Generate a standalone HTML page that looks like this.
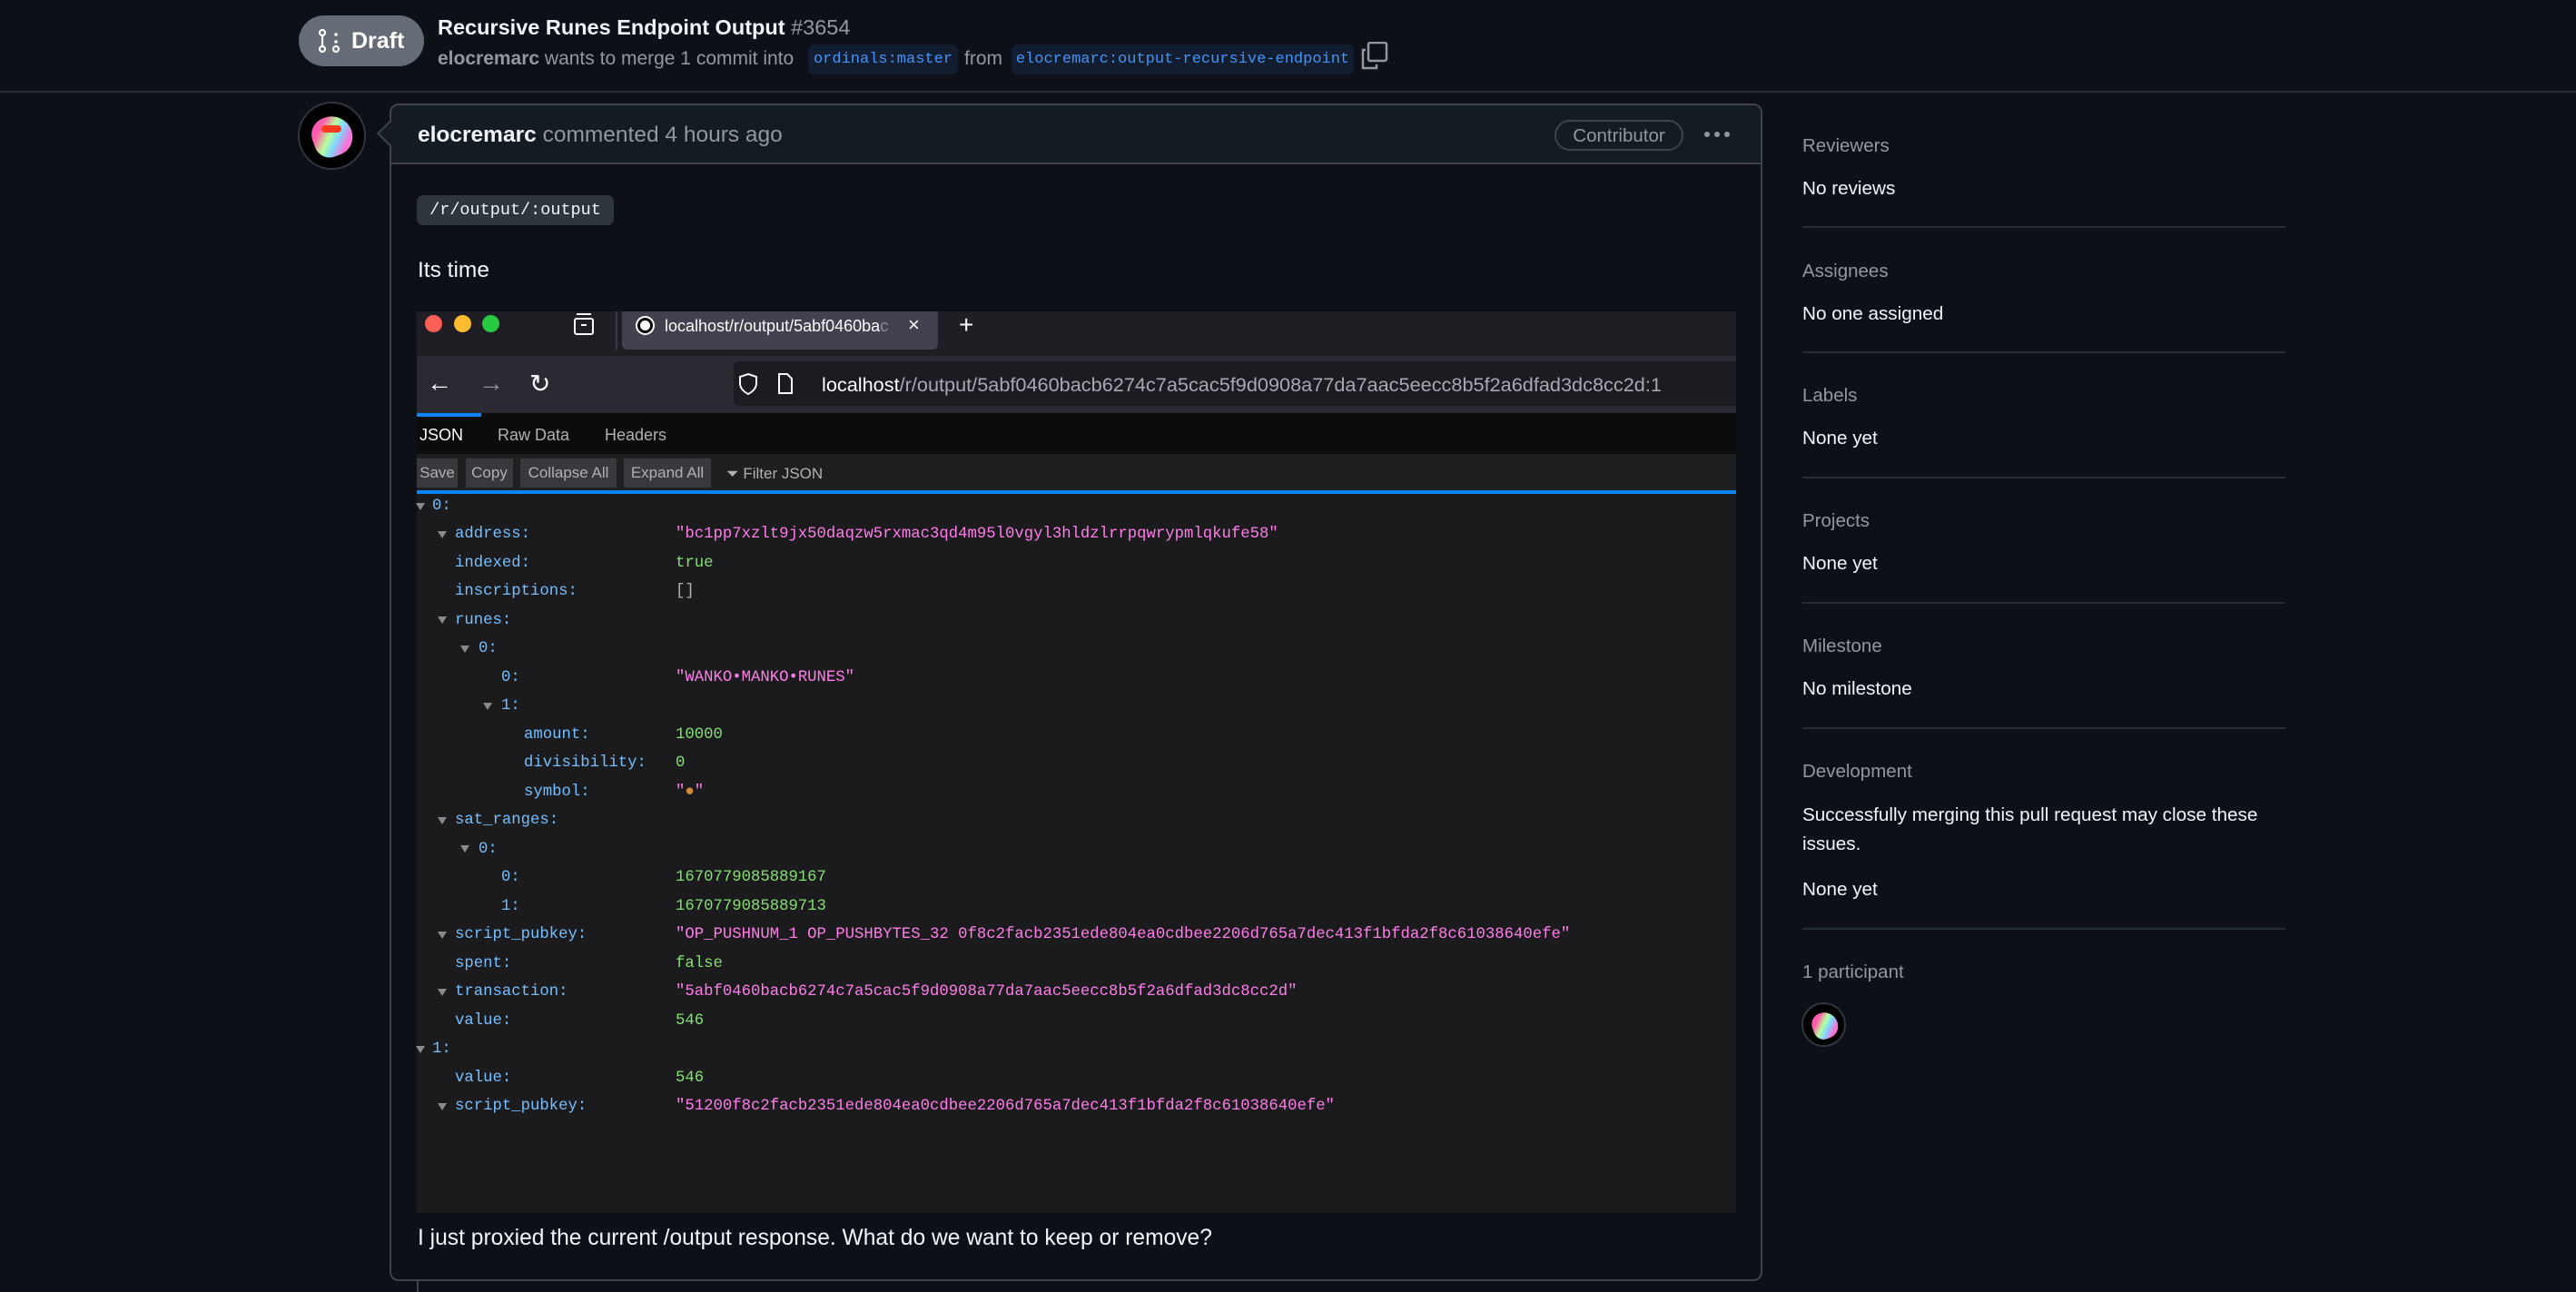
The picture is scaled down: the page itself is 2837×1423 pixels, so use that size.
<!DOCTYPE html>
<html><head><meta charset="utf-8"><style>
*{margin:0;padding:0;box-sizing:border-box}
body{width:2837px;height:1423px;background:#0d1117;position:relative;overflow:hidden;font-family:"Liberation Sans",sans-serif;color:#f0f6fc}
.a{position:absolute;white-space:nowrap}
.m{font-family:"Liberation Mono",monospace}
.sh{color:#9198a1;font-size:20.5px}
.sv{color:#f0f6fc;font-size:20.7px}
.hr{position:absolute;left:1985px;width:532px;height:2px;background:#262c34}
.k{position:absolute;font-family:"Liberation Mono",monospace;font-size:17.3px;color:#75bfff;line-height:30px}
.v{position:absolute;left:744px;font-family:"Liberation Mono",monospace;font-size:17.3px;line-height:30px}
.s{color:#ff7de9}.n{color:#86de74}
.ar{position:absolute;width:0;height:0;border-left:5px solid transparent;border-right:5px solid transparent;border-top:8px solid #8a8a8d}
.btn{position:absolute;top:503px;height:32px;background:#38383d;color:#b1b1b3;font-size:17px;line-height:32px;padding-left:0;text-align:center}
.av{position:absolute;border-radius:50%;background:#000;border:2px solid #30363d;overflow:hidden}
.blob{position:absolute;border-radius:45% 55% 50% 40%;background:linear-gradient(135deg,#ff4fd8 0%,#ff5fa8 25%,#b7ff9a 45%,#7fd8ff 60%,#ff6ad5 80%,#ffd0f0 100%)}
</style></head><body>
<!-- header -->
<div class="a" style="left:329px;top:17px;width:138px;height:56px;border-radius:28px;background:#656c76"></div>
<svg class="a" style="left:350px;top:32px" width="30" height="28" viewBox="0 0 30 28"><circle cx="5" cy="4" r="3" fill="none" stroke="#fff" stroke-width="2.2"/><line x1="5" y1="7" x2="5" y2="19" stroke="#fff" stroke-width="2.2"/><circle cx="5" cy="22" r="3" fill="none" stroke="#fff" stroke-width="2.2"/><circle cx="20" cy="6" r="1.8" fill="#fff"/><circle cx="20" cy="14" r="1.8" fill="#fff"/><circle cx="20" cy="22" r="3" fill="none" stroke="#fff" stroke-width="2.2"/></svg>
<div class="a" style="left:387px;top:31px;font-size:25px;font-weight:bold;color:#fff">Draft</div>
<div class="a" style="left:482px;top:17px;font-size:23.5px;font-weight:bold;color:#f0f6fc">Recursive Runes Endpoint Output <span style="font-weight:normal;color:#9198a1">#3654</span></div>
<div class="a" style="left:482px;top:53px;font-size:21px;color:#9198a1"><b style="color:#9198a1">elocremarc</b> wants to merge 1 commit into</div>
<div class="a m" style="left:890px;top:49px;width:165px;height:33px;border-radius:7px;background:#121d2f;color:#4493f8;font-size:17px;line-height:33px;text-align:center">ordinals:master</div>
<div class="a" style="left:1062px;top:53px;font-size:21px;color:#9198a1">from</div>
<div class="a m" style="left:1114px;top:49px;width:377px;height:33px;border-radius:7px;background:#121d2f;color:#4493f8;font-size:17px;line-height:33px;text-align:center">elocremarc:output-recursive-endpoint</div>
<svg class="a" style="left:1499px;top:46px" width="30" height="31"><rect x="8" y="1" width="20" height="20" rx="2" fill="none" stroke="#9198a1" stroke-width="2.5"/><path d="M5 9 H2 V29 H17 V25" fill="none" stroke="#9198a1" stroke-width="2.5"/></svg>
<div class="a" style="left:0;top:100px;width:2837px;height:2px;background:#262c34"></div>

<!-- avatar -->
<div class="av" style="left:328px;top:112px;width:75px;height:75px"><div class="blob" style="left:14px;top:14px;width:44px;height:44px;transform:rotate(-20deg)"></div><div class="a" style="left:24px;top:24px;width:22px;height:8px;background:#ff3b1f;border-radius:4px"></div></div>

<!-- comment box -->
<div class="a" style="left:429px;top:114px;width:1512px;height:1297px;border:2px solid #3d444d;border-radius:10px;background:#0d1117"></div>
<div class="a" style="left:431px;top:116px;width:1508px;height:65px;background:#151b23;border-radius:8px 8px 0 0;border-bottom:2px solid #3d444d"></div>
<div class="a" style="left:419px;top:137px;width:20px;height:20px;background:#151b23;border-left:2px solid #3d444d;border-bottom:2px solid #3d444d;transform:rotate(45deg)"></div>
<div class="a" style="left:460px;top:135px;font-size:24.5px;color:#9198a1"><b style="color:#f0f6fc">elocremarc</b> commented 4 hours ago</div>
<div class="a" style="left:1712px;top:132px;width:142px;height:34px;border:2px solid #3d444d;border-radius:17px;color:#9198a1;font-size:20.5px;line-height:31px;text-align:center">Contributor</div>
<div class="a" style="left:1877px;top:145px;width:6px;height:6px;border-radius:3px;background:#9198a1"></div>
<div class="a" style="left:1888px;top:145px;width:6px;height:6px;border-radius:3px;background:#9198a1"></div>
<div class="a" style="left:1899px;top:145px;width:6px;height:6px;border-radius:3px;background:#9198a1"></div>

<div class="a m" style="left:459px;top:215px;width:217px;height:33px;border-radius:7px;background:#2f353d;color:#f0f6fc;font-size:18.5px;line-height:34px;text-align:center">/r/output/:output</div>
<div class="a" style="left:460px;top:284px;font-size:24.5px">Its time</div>

<!-- screenshot -->
<div class="a" style="left:459px;top:343px;width:1453px;height:993px;background:#1b1b1d"></div>
<div class="a" style="left:459px;top:343px;width:1453px;height:49px;background:#1f1e25"></div>
<div class="a" style="left:468px;top:347px;width:19px;height:19px;border-radius:50%;background:#fe5f57"></div>
<div class="a" style="left:500px;top:347px;width:19px;height:19px;border-radius:50%;background:#febc2e"></div>
<div class="a" style="left:531px;top:347px;width:19px;height:19px;border-radius:50%;background:#28c840"></div>
<svg class="a" style="left:630px;top:343px" width="26" height="28"><rect x="3" y="8" width="20" height="17" rx="2" fill="none" stroke="#fbfbfe" stroke-width="2"/><line x1="5" y1="3" x2="21" y2="3" stroke="#fbfbfe" stroke-width="2"/><line x1="10" y1="15" x2="16" y2="15" stroke="#fbfbfe" stroke-width="2"/></svg>
<div class="a" style="left:678px;top:343px;width:2px;height:42px;background:#3a3944"></div>
<div class="a" style="left:685px;top:343px;width:348px;height:42px;background:#42414d;border-radius:0 0 6px 6px"></div>
<div class="a" style="left:700px;top:348px;width:21px;height:21px;border-radius:50%;background:#000;border:2px solid #fff"></div>
<div class="a" style="left:705px;top:353px;width:11px;height:11px;border-radius:50%;background:#fff"></div>
<div class="a" style="left:732px;top:349px;font-size:18px;color:#fbfbfe;width:262px;overflow:hidden">localhost/r/output/5abf0460ba<span style="color:#8f8f9d">c</span></div>
<div class="a" style="left:1000px;top:345px;font-size:22px;color:#fbfbfe">×</div>
<div class="a" style="left:1056px;top:342px;font-size:28px;color:#fbfbfe">+</div>
<div class="a" style="left:459px;top:392px;width:1453px;height:63px;background:#2b2a33"></div>
<div class="a" style="left:470px;top:406px;font-size:28px;color:#fbfbfe">←</div>
<div class="a" style="left:527px;top:406px;font-size:28px;color:#8f8f9d">→</div>
<div class="a" style="left:583px;top:406px;font-size:28px;color:#fbfbfe">↻</div>
<div class="a" style="left:808px;top:398px;width:1104px;height:49px;background:#1c1b22;border-radius:6px 0 0 6px"></div>
<svg class="a" style="left:812px;top:410px" width="24" height="26"><path d="M12 2 L21 5 V12 C21 18 16 22 12 24 C8 22 3 18 3 12 V5 Z" fill="none" stroke="#fbfbfe" stroke-width="2"/></svg>
<svg class="a" style="left:855px;top:410px" width="20" height="26"><path d="M3 2 H12 L17 7 V23 H3 Z" fill="none" stroke="#fbfbfe" stroke-width="2"/></svg>
<div class="a" style="left:905px;top:411px;font-size:21.7px;color:#fbfbfe">localhost<span style="color:#a8a8b2">/r/output/5abf0460bacb6274c7a5cac5f9d0908a77da7aac5eecc8b5f2a6dfad3dc8cc2d:1</span></div>
<div class="a" style="left:459px;top:455px;width:1453px;height:46px;background:#0c0c0d"></div>
<div class="a" style="left:459px;top:455px;width:71px;height:4px;background:#0a84ff"></div>
<div class="a" style="left:462px;top:469px;font-size:18px;color:#fbfbfe">JSON</div>
<div class="a" style="left:548px;top:469px;font-size:18px;color:#b1b1b3">Raw Data</div>
<div class="a" style="left:666px;top:469px;font-size:18px;color:#b1b1b3">Headers</div>
<div class="a" style="left:459px;top:500px;width:1453px;height:40px;background:#1e1f21"></div>
<div class="btn" style="left:459px;width:45px;top:505px">Save</div>
<div class="btn" style="left:513px;width:52px;top:505px">Copy</div>
<div class="btn" style="left:573px;width:106px;top:505px">Collapse All</div>
<div class="btn" style="left:687px;width:96px;top:505px">Expand All</div>
<div class="a" style="left:800px;top:512px;font-size:17px;color:#b1b1b3">⏷ Filter JSON</div>
<div class="a" style="left:459px;top:540px;width:1453px;height:4px;background:#0a84ff"></div>

<!-- json rows -->
<div class="ar" style="left:458px;top:554px"></div><div class="k" style="left:476px;top:543px">0:</div>
<div class="ar" style="left:482px;top:585px"></div><div class="k" style="left:501px;top:574px">address:</div><div class="v s" style="top:574px">"bc1pp7xzlt9jx50daqzw5rxmac3qd4m95l0vgyl3hldzlrrpqwrypmlqkufe58"</div>
<div class="k" style="left:501px;top:606px">indexed:</div><div class="v n" style="top:606px">true</div>
<div class="k" style="left:501px;top:637px">inscriptions:</div><div class="v" style="top:637px;color:#b1b1b3">[]</div>
<div class="ar" style="left:482px;top:679px"></div><div class="k" style="left:501px;top:669px">runes:</div>
<div class="ar" style="left:507px;top:711px"></div><div class="k" style="left:527px;top:700px">0:</div>
<div class="k" style="left:552px;top:732px">0:</div><div class="v s" style="top:732px">"WANKO•MANKO•RUNES"</div>
<div class="ar" style="left:532px;top:774px"></div><div class="k" style="left:552px;top:763px">1:</div>
<div class="k" style="left:577px;top:795px">amount:</div><div class="v n" style="top:795px">10000</div>
<div class="k" style="left:577px;top:826px">divisibility:</div><div class="v n" style="top:826px">0</div>
<div class="k" style="left:577px;top:858px">symbol:</div><div class="v s" style="top:858px">"<span style="color:#d08a3a">●</span>"</div>
<div class="ar" style="left:482px;top:900px"></div><div class="k" style="left:501px;top:889px">sat_ranges:</div>
<div class="ar" style="left:507px;top:931px"></div><div class="k" style="left:527px;top:921px">0:</div>
<div class="k" style="left:552px;top:952px">0:</div><div class="v n" style="top:952px">1670779085889167</div>
<div class="k" style="left:552px;top:984px">1:</div><div class="v n" style="top:984px">1670779085889713</div>
<div class="ar" style="left:482px;top:1026px"></div><div class="k" style="left:501px;top:1015px">script_pubkey:</div><div class="v s" style="top:1015px">"OP_PUSHNUM_1 OP_PUSHBYTES_32 0f8c2facb2351ede804ea0cdbee2206d765a7dec413f1bfda2f8c61038640efe"</div>
<div class="k" style="left:501px;top:1047px">spent:</div><div class="v n" style="top:1047px">false</div>
<div class="ar" style="left:482px;top:1089px"></div><div class="k" style="left:501px;top:1078px">transaction:</div><div class="v s" style="top:1078px">"5abf0460bacb6274c7a5cac5f9d0908a77da7aac5eecc8b5f2a6dfad3dc8cc2d"</div>
<div class="k" style="left:501px;top:1110px">value:</div><div class="v n" style="top:1110px">546</div>
<div class="ar" style="left:458px;top:1152px"></div><div class="k" style="left:476px;top:1141px">1:</div>
<div class="k" style="left:501px;top:1173px">value:</div><div class="v n" style="top:1173px">546</div>
<div class="ar" style="left:482px;top:1215px"></div><div class="k" style="left:501px;top:1204px">script_pubkey:</div><div class="v s" style="top:1204px">"51200f8c2facb2351ede804ea0cdbee2206d765a7dec413f1bfda2f8c61038640efe"</div>

<div class="a" style="left:460px;top:1350px;font-size:24.6px">I just proxied the current /output response. What do we want to keep or remove?</div>
<div class="a" style="left:459px;top:1411px;width:2px;height:12px;background:#3d444d"></div>

<!-- sidebar -->
<div class="a sh" style="left:1985px;top:149px">Reviewers</div>
<div class="a sv" style="left:1985px;top:196px">No reviews</div>
<div class="hr" style="top:249px"></div>
<div class="a sh" style="left:1985px;top:287px">Assignees</div>
<div class="a sv" style="left:1985px;top:334px">No one assigned</div>
<div class="hr" style="top:387px"></div>
<div class="a sh" style="left:1985px;top:424px">Labels</div>
<div class="a sv" style="left:1985px;top:471px">None yet</div>
<div class="hr" style="top:525px"></div>
<div class="a sh" style="left:1985px;top:562px">Projects</div>
<div class="a sv" style="left:1985px;top:609px">None yet</div>
<div class="hr" style="top:663px"></div>
<div class="a sh" style="left:1985px;top:700px">Milestone</div>
<div class="a sv" style="left:1985px;top:747px">No milestone</div>
<div class="hr" style="top:801px"></div>
<div class="a sh" style="left:1985px;top:838px">Development</div>
<div class="a sv" style="left:1985px;top:886px">Successfully merging this pull request may close these</div>
<div class="a sv" style="left:1985px;top:918px">issues.</div>
<div class="a sv" style="left:1985px;top:968px">None yet</div>
<div class="hr" style="top:1022px"></div>
<div class="a sh" style="left:1985px;top:1059px">1 participant</div>
<div class="av" style="left:1984px;top:1104px;width:49px;height:49px"><div class="blob" style="left:10px;top:9px;width:28px;height:29px;transform:rotate(-20deg)"></div></div>
</body></html>
